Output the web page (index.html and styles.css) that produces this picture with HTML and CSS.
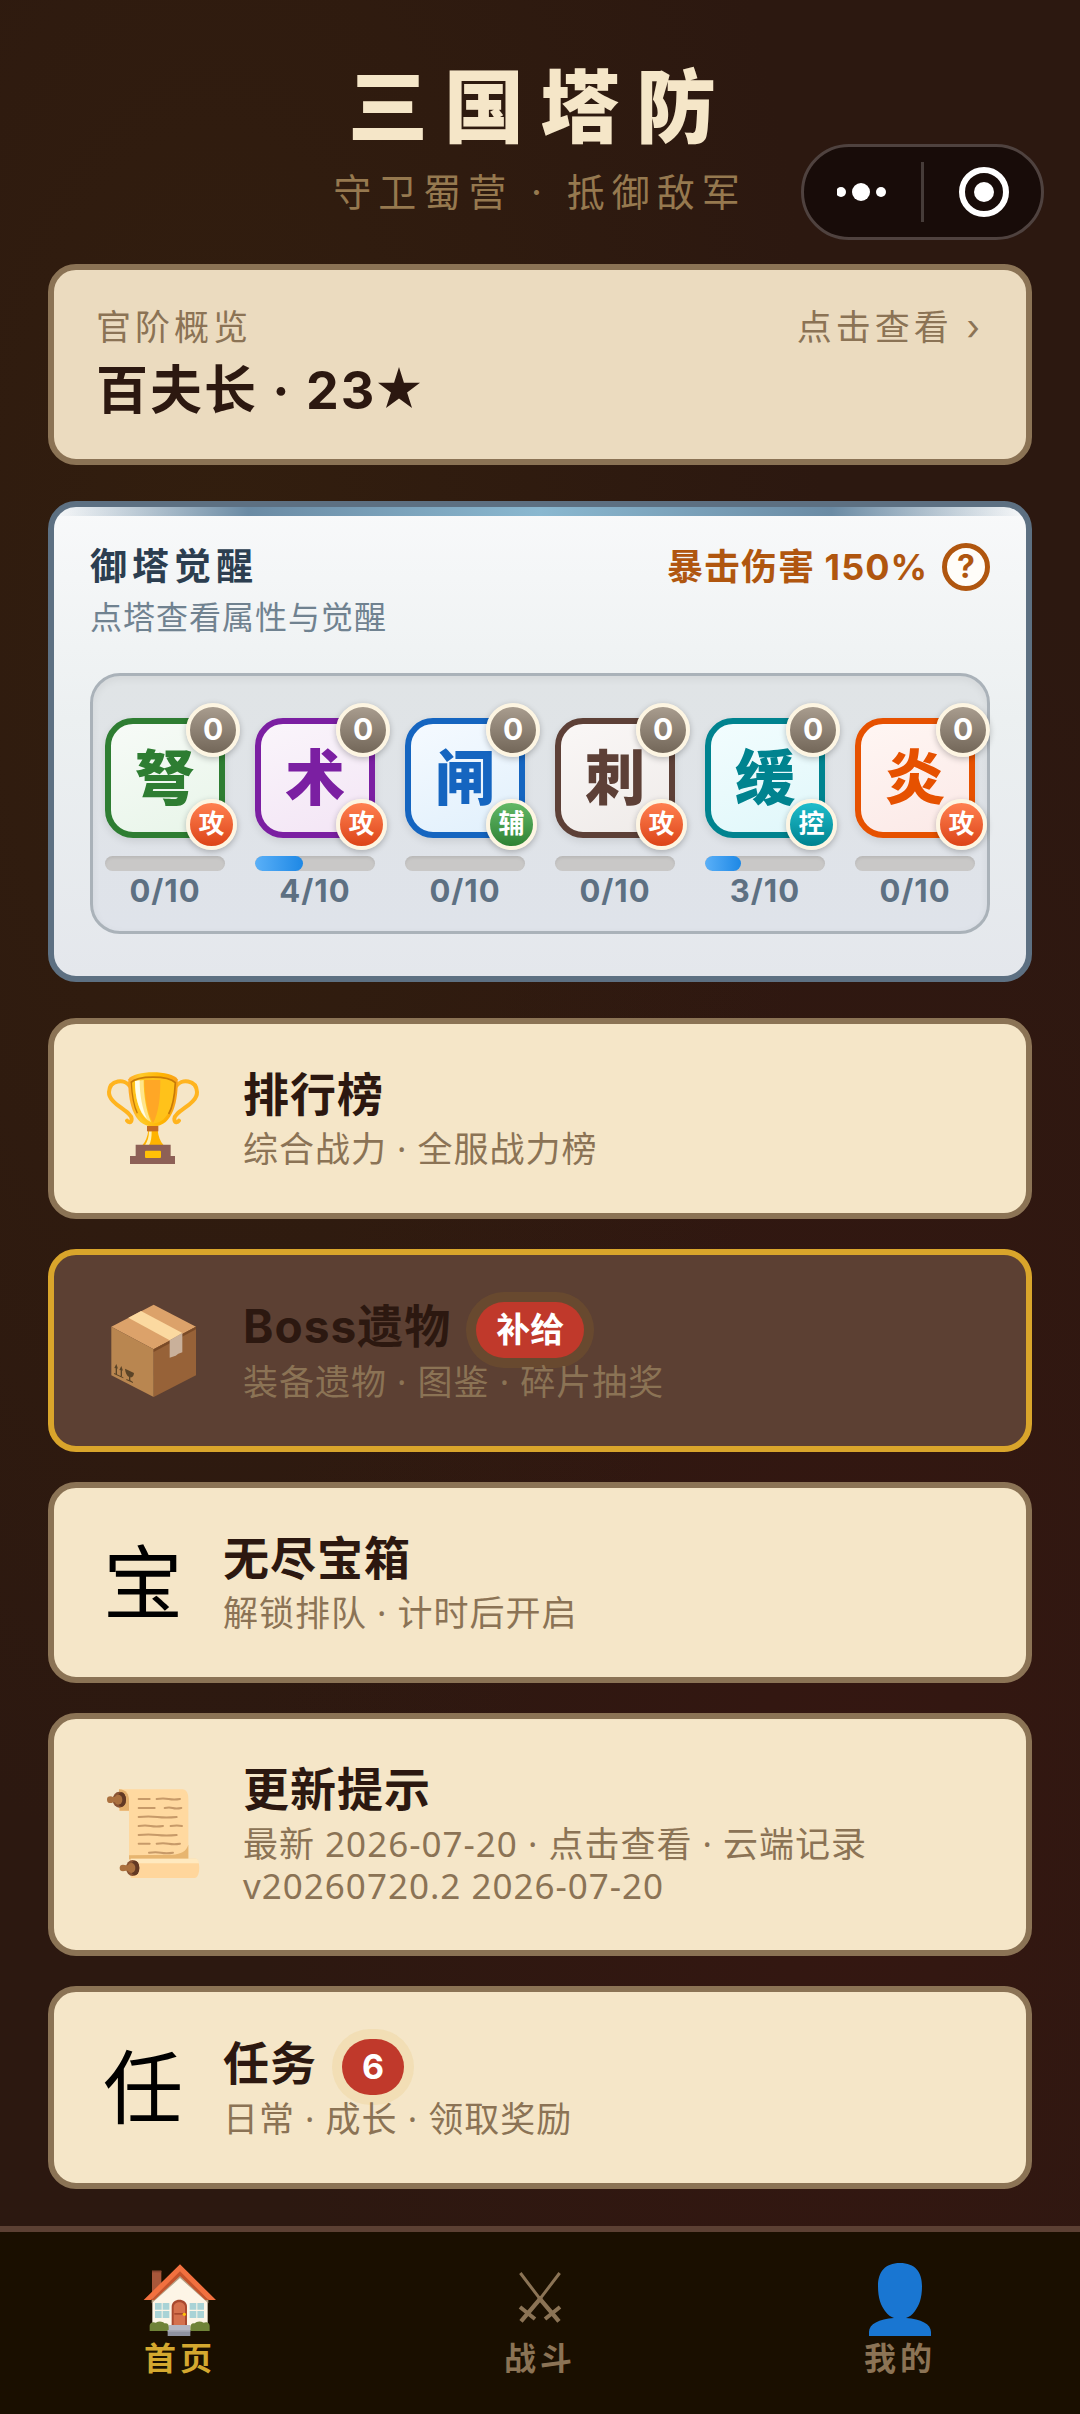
FILE: index.html
```html
<!DOCTYPE html>
<html lang="zh-CN">
<head>
<meta charset="utf-8">
<meta name="viewport" content="width=device-width, initial-scale=1">
<title>三国塔防</title>
<link rel="stylesheet" href="styles.css">
</head>
<body>
<div class="app">
  <div class="capsule">
    <button class="capsule-btn" type="button" aria-label="更多">
      <svg width="52" height="60" viewBox="0 0 52 60" fill="#fff"><circle cx="4" cy="30" r="5"/><circle cx="24" cy="30" r="9"/><circle cx="44" cy="30" r="5"/></svg>
    </button>
    <span class="capsule-line"></span>
    <button class="capsule-btn" type="button" aria-label="关闭">
      <svg width="52" height="60" viewBox="0 0 52 60"><circle cx="27" cy="30" r="22" fill="none" stroke="#fff" stroke-width="6"/><circle cx="27" cy="30" r="10" fill="#fff"/></svg>
    </button>
  </div>

  <header class="hero">
    <h1 class="hero-title">三国塔防</h1>
    <p class="hero-sub">守卫蜀营 · 抵御敌军</p>
  </header>

  <main class="content">
    <button class="card rank" type="button">
      <span class="rank-top"><span>官阶概览</span><span>点击查看 ›</span></span>
      <span class="rank-name">百夫长 · 23<svg class="star" viewBox="0 0 40 40" aria-label="★"><path d="M20 0 24.700 15H40L27.700 24.200 32.400 39 20 30 7.600 39 12.300 24.200 0 15H15.300Z" fill="#2c1810"/></svg></span>
    </button>

    <section class="awaken">
      <div class="awaken-head">
        <div>
          <h2 class="awaken-title">御塔觉醒</h2>
          <p class="awaken-sub">点塔查看属性与觉醒</p>
        </div>
        <div class="crit"><span>暴击伤害 150%</span><button class="help" type="button">?</button></div>
      </div>
      <div class="towers">
        <div class="tower">
          <button class="tile green" type="button">弩<span class="level">0</span><span class="role attack">攻</span></button>
          <div class="bar"><div class="fill" style="width:0%"></div></div>
          <span class="count">0/10</span>
        </div>
        <div class="tower">
          <button class="tile purple" type="button">术<span class="level">0</span><span class="role attack">攻</span></button>
          <div class="bar"><div class="fill" style="width:40%"></div></div>
          <span class="count">4/10</span>
        </div>
        <div class="tower">
          <button class="tile blue" type="button">闸<span class="level">0</span><span class="role support">辅</span></button>
          <div class="bar"><div class="fill" style="width:0%"></div></div>
          <span class="count">0/10</span>
        </div>
        <div class="tower">
          <button class="tile brown" type="button">刺<span class="level">0</span><span class="role attack">攻</span></button>
          <div class="bar"><div class="fill" style="width:0%"></div></div>
          <span class="count">0/10</span>
        </div>
        <div class="tower">
          <button class="tile teal" type="button">缓<span class="level">0</span><span class="role control">控</span></button>
          <div class="bar"><div class="fill" style="width:30%"></div></div>
          <span class="count">3/10</span>
        </div>
        <div class="tower">
          <button class="tile orange" type="button">炎<span class="level">0</span><span class="role attack">攻</span></button>
          <div class="bar"><div class="fill" style="width:0%"></div></div>
          <span class="count">0/10</span>
        </div>
      </div>
    </section>

    <div class="menu">
      <button class="card item" type="button">
        <svg class="emoji" viewBox="42 57 300 300">
          <defs><linearGradient id="cup" x1="0" x2="1"><stop offset="0" stop-color="#ffa726"/><stop offset=".25" stop-color="#ffca28"/><stop offset=".7" stop-color="#ffb300"/><stop offset="1" stop-color="#f9a01b"/></linearGradient></defs>
          <g fill="none" stroke="#ffb41f" stroke-width="12" stroke-linecap="round"><path d="M122 108C108 86 62 88 60 126c-2 36 68 58 68 80 0 14-10 12-14 6"/><path d="M262 108c14-22 60-20 62 18 2 36-68 58-68 80 0 14 10 12 14 6"/></g>
          <path d="M178 240h28c2 20 8 34 18 46h-64c10-12 16-26 18-46z" fill="#ffb300"/><path d="M180 244h8c0 18-2 32-8 42h-12c8-12 12-26 12-42z" fill="#fff0b3"/>
          <path d="M118 88c18-28 130-28 148 0 2 58-12 142-74 142S116 146 118 88z" fill="url(#cup)"/>
          <path d="M126 96c24-18 108-18 132 0-2 54-16 124-66 124s-64-70-66-124z" fill="#ffc21a"/>
          <path d="M166 90h48c0 50-4 96-22 130-16-28-26-80-26-130z" fill="#ffa726"/>
          <path d="M138 93l26-3c0 48 8 92 22 126-30-12-48-62-48-123z" fill="#ffe58a"/><path d="M138 93l14-2c0 46 8 86 22 116-24-22-36-62-36-114z" fill="#fffde7"/>
          <path d="M125 98c22-22 112-22 134 0-2 40-8 72-20 94" fill="none" stroke="#c77a08" stroke-width="5"/>
          <path d="M127 98c2 42 8 70 18 92" fill="none" stroke="#c77a08" stroke-width="4"/>
          <path d="M174 228h34v16h-34z" fill="#c56a22"/><path d="M140 284h105v34h13v24H123v-24h17z" fill="#8d6056"/><rect x="168" y="302" width="48" height="22" rx="3" fill="#ffc107"/>
        </svg>
        <span class="item-body"><span class="item-title">排行榜</span><span class="item-sub">综合战力 · 全服战力榜</span></span>
      </button>

      <button class="card item boss" type="button">
        <svg class="emoji" viewBox="42 61 300 300">
          <path d="M67 138 194 72l127 66-127 68z" fill="#dca26a"/><path d="M67 138l127 68v143L67 284z" fill="#b98650"/><path d="M321 138l-127 68v143l127-65z" fill="#976238"/>
          <path d="M194 206l127-68v8l-127 68z" fill="#7b4b27"/><path d="M118 111l38-20 124 66-38 22z" fill="#fbd9a0"/><path d="M242 179l38-22v58l-12 4-8 6-18 6z" fill="#c9b09a"/>
          <g fill="#5b4427"><path d="M76 262l6-12 5 14-3-1v18h-4v-18zM91 268l6-12 5 14-3-1v18h-4v-18zM75 277l28 13v3l-28-13zM108 264l27 13c-1 10-5 14-11 13v9l8 5v3l-20-9v-3l8 3v-9c-7-4-11-14-12-25z"/></g>
        </svg>
        <span class="item-body"><span class="item-title">Boss遗物<span class="badge">补给</span></span><span class="item-sub">装备遗物 · 图鉴 · 碎片抽奖</span></span>
      </button>

      <button class="card item" type="button">
        <span class="glyph">宝</span>
        <span class="item-body"><span class="item-title">无尽宝箱</span><span class="item-sub">解锁排队 · 计时后开启</span></span>
      </button>

      <button class="card item" type="button">
        <svg class="emoji" viewBox="42 73 300 300">
          <path d="M90 86h190c12 0 18 12 18 28v184H120V150H90z" fill="#ffd9a0"/><path d="M90 86c22 0 30 16 30 34v30H92z" fill="#e5b06c"/><path d="M250 282c26-2 42-10 48-30v44H120v-12z" fill="#e7b570"/>
          <path d="M125 294h195c14 0 16 58-4 58H125z" fill="#ffd69c"/><path d="M125 294h195c6 0 9 6 10 14H130z" fill="#ffe9bf"/>
          <g fill="#8a5433"><ellipse cx="91" cy="117" rx="20" ry="24"/><ellipse cx="131" cy="322" rx="20" ry="24"/></g>
          <g fill="#633923"><ellipse cx="98" cy="117" rx="13" ry="22"/><ellipse cx="138" cy="322" rx="13" ry="22"/></g>
          <g fill="#ab713f"><ellipse cx="88" cy="117" rx="12" ry="15"/><circle cx="64" cy="117" r="10"/><path d="M64 109h22v16H64zM102 314h22v16h-22z"/><ellipse cx="127" cy="322" rx="12" ry="15"/><circle cx="102" cy="322" r="10"/></g>
          <g fill="none" stroke="#c79a69" stroke-width="6" stroke-linecap="round"><path d="M149 115h33M203 115q20-3 36 0t34 0M149 142h48M227 142q14-3 24 0t26 0M149 169q30-3 56 0t58 0M149 196q20-3 36 0t37 0M245 196q20-3 34 0M149 223q30-3 56 0t58 0M149 249h33M203 249q20-3 36 0t34 0M180 276q20-3 36 0t36 0"/></g>
        </svg>
        <span class="item-body"><span class="item-title">更新提示</span><span class="item-sub">最新 2026-07-20 · 点击查看 · 云端记录<br>v20260720.2 2026-07-20</span></span>
      </button>

      <button class="card item" type="button">
        <span class="glyph">任</span>
        <span class="item-body"><span class="item-title">任务<span class="badge">6</span></span><span class="item-sub">日常 · 成长 · 领取奖励</span></span>
      </button>
    </div>
  </main>

  <nav class="tabs">
    <a class="tab active" href="#home">
      <svg class="tab-icon" viewBox="67 66 228 228">
        <path d="M97 92h28v40l-28 28z" fill="#a8573a"/><path d="M97 92h28v5H97z" fill="#8a4630"/>
        <path d="M98 168l83-78 83 78v102H98z" fill="#fdf5e6"/><path d="M96 178l85-84 85 84v12l-85-76-85 76z" fill="#b5a084"/>
        <path d="M72 180L181 73l108 107h-22L181 98 94 180z" fill="#f2703f"/><path d="M94 180l87-86 86 86h-10l-76-72-77 72z" fill="#c4532c"/>
        <g fill="#a9d3d6"><path d="M106 189h20v20h-20zM129 189h20v20h-20zM106 213h20v21h-20zM129 213h20v21h-20zM210 189h20v20h-20zM233 189h20v20h-20zM210 213h20v21h-20zM233 213h20v21h-20z"/></g>
        <path d="M156 256v-56c0-28 46-28 46 0v56z" fill="#a9492e"/><path d="M162 256v-54c0-20 34-20 34 0v54z" fill="#d5714d"/><path d="M164 219h30v5h-30z" fill="#a9492e"/><circle cx="194" cy="223" r="5" fill="#ffc107"/>
        <path d="M90 273v-14c0-14 12-14 18-11 10-6 22-4 26 2 10-2 14 4 14 12v11zM270 273v-14c0-14-12-14-18-11-10-6-22-4-26 2-10-2-14 4-14 12v11z" fill="#6f8338"/>
        <path d="M147 255h64v16h-64z" fill="#b4b7c2"/><path d="M144 271h68v17h-68z" fill="#8f92a0"/><path d="M144 270h68v5h-68z" fill="#a7a9b5"/>
      </svg>
      <span>首页</span>
    </a>
    <a class="tab" href="#battle">
      <svg class="tab-icon" viewBox="36 36 228 228" fill="none" stroke="#8b7355"><path d="M91 69L154 152M209 69L146 152" stroke-width="9"/><path d="M146 142L207 214M154 142L93 214" stroke-width="13"/><path d="M90 171L135 207M210 171L165 207" stroke-width="12"/></svg>
      <span>战斗</span>
    </a>
    <a class="tab" href="#mine">
      <svg class="tab-icon" viewBox="0 0 76 76"><path d="M38 1c15 0 22 9 22 23 0 13-3 19-7 25-3 4-6 6-9 7 15 1 25 6 25 14v4H7v-4c0-8 10-13 25-14-3-1-6-3-9-7-4-6-7-12-7-25C16 10 23 1 38 1z" fill="#1976d2"/></svg>
      <span>我的</span>
    </a>
  </nav>
</div>
</body>
</html>
```
FILE: styles.css
```css
* { box-sizing: border-box; }

body {
  margin: 0;
  font-family: Inter, "Noto Sans CJK SC", sans-serif;
  background:
    radial-gradient(ellipse at 20% 25%, rgba(58, 38, 12, .45), transparent 50%),
    radial-gradient(ellipse at 80% 75%, rgba(72, 20, 20, .3), transparent 50%),
    #2c1810;
  color: #2c1810;
}

h1, h2, p { margin: 0; }

button { font: inherit; color: inherit; text-align: left; cursor: pointer; }

.app {
  position: relative;
  display: flex;
  flex-direction: column;
  min-height: 100vh;
}

/* Floating host controls */
.capsule {
  position: absolute;
  top: 144px;
  right: 36px;
  display: flex;
  align-items: center;
  width: 243px;
  height: 96px;
  border: 3px solid #4f423f;
  border-radius: 48px;
  background: #180c09;
}
.capsule-btn {
  display: flex;
  flex: 1;
  justify-content: center;
  padding: 0;
  border: 0;
  background: none;
}
.capsule-line { width: 3px; height: 60px; background: #463c39; }

.hero { padding: 59px 0 48px; text-align: center; }
.hero-title {
  font-size: 80px;
  line-height: 96px;
  font-weight: 900;
  letter-spacing: 16px;
  color: #f5e6c8;
}
.hero-sub {
  margin-top: 13px;
  font-size: 38px;
  line-height: 48px;
  letter-spacing: 7px;
  color: #96794f;
}

.content { flex: 1; padding: 0 48px 37px; }

.card {
  display: flex;
  width: 100%;
  border: 6px solid #8b7355;
  border-radius: 28px;
  background: #f5e6c8;
}

.rank {
  flex-direction: column;
  padding: 34px 42px;
  background: #ebdbbf;
}
.rank-top {
  display: flex;
  justify-content: space-between;
  width: 100%;
  font-size: 35px;
  line-height: 46px;
  letter-spacing: 4px;
  color: #8b7355;
}
.rank-name {
  display: flex;
  align-items: center;
  margin-top: 7px;
  font-size: 52px;
  line-height: 68px;
  font-weight: 700;
  letter-spacing: 2px;
  white-space: pre;
}
.star { width: 42px; height: 42px; margin: 0 0 6px 2px; }

/* Tower awakening panel */
.awaken {
  position: relative;
  margin-top: 36px;
  padding: 36px 36px 42px;
  border: 6px solid #5d7082;
  border-radius: 28px;
  background: linear-gradient(180deg, #f8f9fa, #ecf0f1 45%, #e4e7ec);
  overflow: hidden;
}
.awaken::before {
  content: "";
  position: absolute;
  top: 0;
  left: 0;
  right: 0;
  height: 9px;
  background: linear-gradient(90deg, transparent, #6b8ba4 20%, #8ab8d0 50%, #6b8ba4 80%, transparent);
}
.awaken-head { display: flex; justify-content: space-between; align-items: flex-start; }
.awaken-title {
  font-size: 37px;
  line-height: 48px;
  font-weight: 700;
  letter-spacing: 5px;
  color: #2c3e50;
}
.awaken-sub {
  margin-top: 6px;
  font-size: 32px;
  line-height: 42px;
  letter-spacing: 1px;
  color: #708290;
}
.crit {
  display: flex;
  align-items: center;
  gap: 14px;
  font-size: 36px;
  line-height: 48px;
  font-weight: 700;
  letter-spacing: 1px;
  color: #b0560f;
}
.help {
  width: 48px;
  height: 48px;
  padding: 0;
  border: 5px solid #b0560f;
  border-radius: 50%;
  background: #fffdf9;
  font-size: 32px;
  line-height: 38px;
  letter-spacing: 0;
  text-align: center;
}
.towers {
  display: grid;
  grid-template-columns: repeat(6, 1fr);
  gap: 30px;
  margin-top: 34px;
  padding: 42px 12px 22px;
  border: 3px solid #aab2b9;
  border-radius: 30px;
  background: linear-gradient(180deg, #e0e4e6, #dfe3ea);
  box-shadow: inset 0 3px 9px rgba(0, 0, 0, .06);
}
.tower { display: flex; flex-direction: column; }
.tile {
  position: relative;
  height: 120px;
  padding: 0;
  border: 6px solid;
  border-radius: 28px;
  font-size: 60px;
  line-height: 100px;
  font-weight: 900;
  text-align: center;
  box-shadow: 0 3px 9px rgba(0, 0, 0, .1);
}
.green { color: #2e7d32; background: linear-gradient(160deg, #f7fbf7, #e8f5e9); }
.purple { color: #7b1fa2; background: linear-gradient(160deg, #faf5fb, #f3e5f5); }
.blue { color: #1565c0; background: linear-gradient(160deg, #f5faff, #e1f0fc); }
.brown { color: #5d4037; background: linear-gradient(160deg, #faf7f6, #efebe9); }
.teal { color: #00838f; background: linear-gradient(160deg, #f2fdfe, #e0f7fa); }
.orange { color: #e65100; background: linear-gradient(160deg, #fff6f3, #fbe9e7); }

.level, .role {
  position: absolute;
  border: 4px solid #fdf5e2;
  border-radius: 50%;
  color: #fff;
  font-weight: 700;
  text-align: center;
  box-shadow: 0 2px 6px rgba(0, 0, 0, .25);
}
.level {
  top: -21px;
  right: -21px;
  width: 54px;
  height: 54px;
  background: linear-gradient(180deg, #a89c8e, #736759);
  font-size: 30px;
  line-height: 44px;
}
.role {
  right: -18px;
  bottom: -18px;
  width: 51px;
  height: 51px;
  font-size: 26px;
  line-height: 42px;
}
.attack { background: linear-gradient(180deg, #ff8050, #dc4418); }
.support { background: linear-gradient(180deg, #62b866, #2f8234); }
.control { background: linear-gradient(180deg, #1fbccb, #00838f); }

.bar {
  height: 15px;
  margin-top: 18px;
  border-radius: 8px;
  background: #c9c8c7;
  box-shadow: inset 0 2px 3px rgba(0, 0, 0, .08);
  overflow: hidden;
}
.fill { height: 100%; border-radius: 8px; background: linear-gradient(90deg, #5ab0f8, #1e88e5); }
.count {
  margin-top: 2px;
  font-size: 31px;
  line-height: 36px;
  font-weight: 700;
  letter-spacing: 1px;
  text-align: center;
  color: #5d7082;
}

/* Menu cards */
.menu { display: flex; flex-direction: column; gap: 30px; margin-top: 36px; }
.item { align-items: center; gap: 40px; padding: 43px 49px; }
.emoji { flex: none; width: 100px; height: 100px; }
.glyph { flex: none; font-size: 80px; line-height: 80px; color: #000; }
.item-body { display: flex; flex-direction: column; gap: 6px; }
.item-title {
  display: flex;
  align-items: center;
  font-size: 46px;
  line-height: 55px;
  font-weight: 700;
  letter-spacing: 1px;
}
.item-sub {
  font-family: "Noto Sans", "Noto Sans CJK SC", sans-serif;
  font-size: 35px;
  line-height: 42px;
  letter-spacing: 1px;
  color: #8b7355;
}
.boss { border-color: #d9a52b; background: #5c4033; }
.badge {
  min-width: 61px;
  margin: 4px 0 -3px 25px;
  padding: 0 20px;
  border-radius: 28px;
  background: #c0392b;
  box-shadow: 0 0 0 10px rgba(212, 160, 23, .1);
  color: #fff;
  font-size: 34px;
  line-height: 56px;
  letter-spacing: 0;
  text-align: center;
}

.tabs {
  display: flex;
  border-top: 6px solid #5c4033;
  background: #1a0f00;
}
.tab {
  display: flex;
  flex: 1;
  flex-direction: column;
  align-items: center;
  gap: 1px;
  padding: 30px 0 35px;
  color: #8b7355;
  font-size: 32px;
  line-height: 40px;
  font-weight: 700;
  letter-spacing: 4px;
  text-decoration: none;
}
.tab-icon { width: 76px; height: 76px; }
.active { color: #d4a82f; }
```
